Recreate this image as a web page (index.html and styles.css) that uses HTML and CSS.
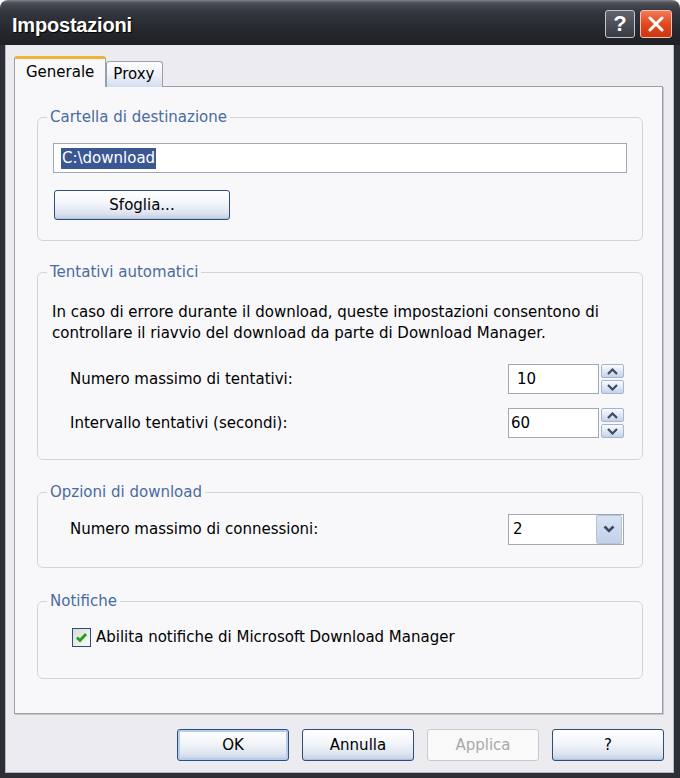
FILE: index.html
```html
<!DOCTYPE html>
<html lang="it">

<head>
  <meta charset="UTF-8">
  <meta name="viewport" content="width=device-width, initial-scale=1.0">
  <title>Impostazioni</title>
  <link rel="stylesheet" href="styles.css">
</head>

<body>
  <div class="window">
    <!-- title bar -->
    <div class="titlebar">
      <span class="title">Impostazioni</span>
      <div class="caption">
        <button class="cap cap-help">?</button>
        <button class="cap cap-close">
          <svg width="16" height="16" viewBox="0 0 16 16">
            <path d="M2 2 L14 14 M14 2 L2 14" stroke="#fff" stroke-width="3" stroke-linecap="round" />
          </svg>
        </button>
      </div>
    </div>

    <div class="frame">
      <!-- tabs -->
      <div class="tabs">
        <div class="tab active">Generale</div>
        <div class="tab">Proxy</div>
      </div>

      <div class="panel">
        <fieldset class="group g-dest">
          <legend>Cartella di destinazione</legend>
          <div class="field path"><span class="sel">C:\download</span></div>
          <button class="btn browse">Sfoglia...</button>
        </fieldset>

        <fieldset class="group g-retry">
          <legend>Tentativi automatici</legend>
          <p class="note">In caso di errore durante il download, queste impostazioni consentono di controllare il riavvio del download da parte di Download Manager.</p>
          <div class="rows">
            <div class="row">
              <label>Numero massimo di tentativi:</label>
              <div class="field num num-a">10</div>
              <div class="spin">
                <span class="spin-btn"><svg width="11" height="7" viewBox="0 0 11 7"><path d="M1 6 L5.5 1.5 L10 6" fill="none" stroke="#3c4a63" stroke-width="2.2" /></svg></span>
                <span class="spin-btn"><svg width="11" height="7" viewBox="0 0 11 7"><path d="M1 1 L5.5 5.5 L10 1" fill="none" stroke="#3c4a63" stroke-width="2.2" /></svg></span>
              </div>
            </div>
            <div class="row">
              <label>Intervallo tentativi (secondi):</label>
              <div class="field num">60</div>
              <div class="spin">
                <span class="spin-btn"><svg width="11" height="7" viewBox="0 0 11 7"><path d="M1 6 L5.5 1.5 L10 6" fill="none" stroke="#3c4a63" stroke-width="2.2" /></svg></span>
                <span class="spin-btn"><svg width="11" height="7" viewBox="0 0 11 7"><path d="M1 1 L5.5 5.5 L10 1" fill="none" stroke="#3c4a63" stroke-width="2.2" /></svg></span>
              </div>
            </div>
          </div>
        </fieldset>

        <fieldset class="group g-opts">
          <legend>Opzioni di download</legend>
          <div class="row">
            <label>Numero massimo di connessioni:</label>
            <div class="field combo">
              <span>2</span>
              <span class="drop"><svg width="12" height="8" viewBox="0 0 12 8"><path d="M1.5 1.5 L6 6 L10.5 1.5" fill="none" stroke="#3c4a63" stroke-width="2.6" /></svg></span>
            </div>
          </div>
        </fieldset>

        <fieldset class="group g-notify">
          <legend>Notifiche</legend>
          <div class="check-row">
            <span class="checkbox"><svg width="13" height="13" viewBox="0 0 13 13"><path d="M2 6.5 L5 9.5 L11 3" fill="none" stroke="#21a01c" stroke-width="2.8" /></svg></span>
            <label>Abilita notifiche di Microsoft Download Manager</label>
          </div>
        </fieldset>
      </div>

      <!-- dialog buttons -->
      <div class="actions">
        <button class="btn wide default">OK</button>
        <button class="btn wide">Annulla</button>
        <button class="btn wide disabled">Applica</button>
        <button class="btn wide">?</button>
      </div>
    </div>
  </div>
</body>

</html>
```

FILE: styles.css
```css
/* reset start */
* {
  box-sizing: border-box;
}

body {
  margin: 0;
  background: #fff;
  font-family: "DejaVu Sans", "Liberation Sans", sans-serif;
  font-size: 15px;
  color: #000;
}

button {
  font: inherit;
  color: inherit;
  padding: 0;
}

/* reset end */

.window {
  width: 680px;
  height: 778px;
  display: flex;
  flex-direction: column;
}

/* title bar start */
.titlebar {
  height: 45px;
  flex: none;
  display: flex;
  align-items: center;
  justify-content: space-between;
  padding: 2px 8px 0 12px;
  border-radius: 8px 8px 0 0;
  background: linear-gradient(#80838b 0, #4a4d55 3px, #33363d 12px, #272a30 60%, #1e2025 100%);
}

.title {
  color: #fff;
  font: bold 20px "Liberation Sans", sans-serif;
  letter-spacing: -0.2px;
  padding-top: 4px;
  text-shadow: 1px 1px 1px #000;
}

.caption {
  display: flex;
  gap: 5px;
}

.cap {
  height: 28px;
  border: 1px solid #c3c6cd;
  border-radius: 3px;
  display: flex;
  align-items: center;
  justify-content: center;
}

.cap-help {
  width: 30px;
  background: linear-gradient(#60646d, #383b42);
  color: #fff;
  font: bold 22px "Liberation Sans", sans-serif;
}

.cap-close {
  width: 32px;
  border-color: #f3c2b2;
  background: linear-gradient(#f27a56, #df4a22 50%, #cc3510);
}

/* title bar end */

/* frame start */
.frame {
  flex: 1;
  display: flex;
  flex-direction: column;
  padding: 11px 11px 0 9px;
  background: #ecebef;
  border: 5px solid #2c2f35;
  border-top: 0;
  border-right-width: 6px;
  box-shadow: inset 1px 0 #b4b8c1, inset -1px 0 #b4b8c1, inset 0 -1px #b4b8c1;
}

/* tabs start */
.tabs {
  display: flex;
  align-items: flex-end;
  height: 31px;
  margin-bottom: -1px;
  position: relative;
  z-index: 1;
}

.tab {
  height: 26px;
  padding: 0 8px 0 6px;
  line-height: 25px;
  border: 1px solid #9ba0a8;
  border-bottom: 0;
  border-radius: 3px 3px 0 0;
  background: linear-gradient(#fefefe, #eef2f9 50%, #d3ddef);
}

.tab.active {
  height: 31px;
  padding: 0 11px;
  line-height: 27px;
  border-top: 3px solid #f2b33b;
  background: #f8f8fa;
}

/* tabs end */

.panel {
  height: 628px;
  flex: none;
  display: flex;
  flex-direction: column;
  gap: 22px;
  padding: 21px 19px 0 22px;
  background: #f8f8fa;
  border: 1px solid #9ba0a8;
  box-shadow: 1px 1px 0 #c4c7ce;
}

/* group boxes start */
.group {
  margin: 0;
  min-width: 0;
  border: 1px solid #d3d4d9;
  border-radius: 6px;
  padding: 0 18px 0 15px;
}

.group legend {
  padding: 0 3px;
  margin-left: -6px;
  line-height: 18px;
  color: #4a6ba2;
}

.g-dest {
  padding: 17px 15px 20px 15px;
}

.g-retry {
  padding-top: 21px;
  padding-bottom: 21px;
}

.g-opts {
  margin-top: 1px;
  padding-top: 13px;
  padding-bottom: 23px;
}

.g-notify {
  margin-top: 2px;
  padding-top: 17px;
  padding-bottom: 31px;
}

/* group boxes end */

/* controls start */
.field {
  height: 30px;
  display: flex;
  align-items: center;
  border: 1px solid #a2a8b1;
  background: #fff;
}

.path {
  padding-left: 7px;
}

.sel {
  background: #3a5794;
  color: #fff;
  line-height: 21px;
  padding: 0 1px;
}

.btn {
  height: 30px;
  border: 1px solid #2f4d7c;
  border-radius: 3px;
  background: linear-gradient(#ffffff, #f4f6fa 40%, #dfe5f0 78%, #c2cee3);
  box-shadow: inset 0 -1px #b3c1da;
}

.browse {
  display: block;
  width: 176px;
  margin: 17px 0 0 1px;
}

.note {
  margin: 0 0 0 -1px;
  line-height: 21px;
}

.rows {
  margin-top: 20px;
}

.row {
  display: flex;
  align-items: center;
  height: 30px;
  padding-left: 17px;
}

.row + .row {
  margin-top: 14px;
}

.row label {
  flex: 1;
}

.num {
  width: 91px;
  padding-left: 2px;
}

.num-a {
  padding-left: 8px;
}

.spin {
  display: flex;
  flex-direction: column;
  gap: 2px;
  margin-left: 2px;
}

.spin-btn {
  width: 23px;
  height: 14px;
  display: flex;
  align-items: center;
  justify-content: center;
  border: 1px solid #a6b5cf;
  border-radius: 2px;
  background: linear-gradient(#fbfcfe, #dbe4f3 60%, #c3d1ea);
}

.combo {
  width: 116px;
  height: 31px;
  padding: 0 1px 0 4px;
  justify-content: space-between;
}

.drop {
  width: 26px;
  height: 29px;
  display: flex;
  align-items: center;
  justify-content: center;
  border: 1px solid #b4c3dc;
  border-radius: 2px;
  background: linear-gradient(#d9e3f3, #c2d0e9);
}

.check-row {
  display: flex;
  align-items: center;
  gap: 5px;
  padding-left: 19px;
  height: 20px;
}

.checkbox {
  width: 19px;
  height: 19px;
  display: flex;
  align-items: center;
  justify-content: center;
  border: 1px solid #2a4d7f;
  background: linear-gradient(135deg, #dcdcd6, #fbfbf9);
}

/* controls end */

/* dialog buttons start */
.actions {
  display: flex;
  justify-content: flex-end;
  gap: 13px;
  padding-top: 15px;
  margin-right: -1px;
}

.btn.wide {
  width: 112px;
  height: 32px;
}

.btn.default {
  box-shadow: inset 0 0 0 2px #b7cdee, inset 0 -2px #9fb8e0;
}

.btn.disabled {
  border-color: #c9cacd;
  background: #f9f9fa;
  box-shadow: none;
  color: #a9a9ab;
}

/* dialog buttons end */
```
